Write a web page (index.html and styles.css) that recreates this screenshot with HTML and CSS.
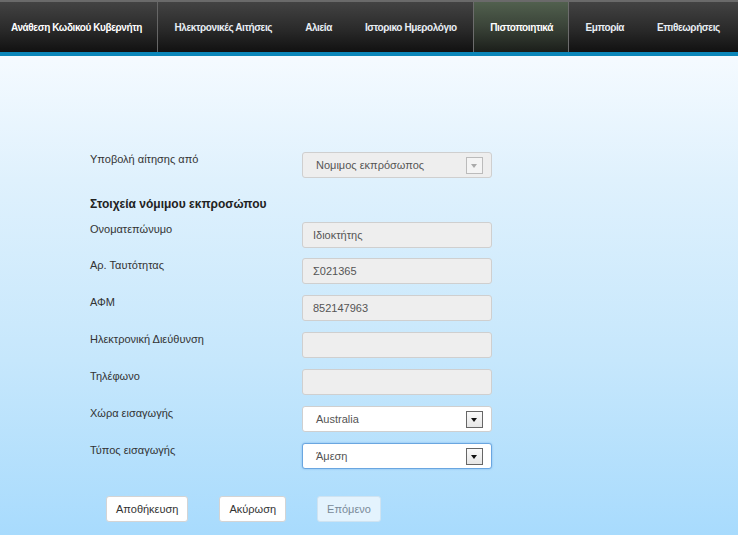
FILE: index.html
```html
<!DOCTYPE html>
<html lang="el">
<head>
<meta charset="utf-8">
<title>Πιστοποιητικά</title>
<link rel="stylesheet" href="styles.css">
</head>
<body>
<nav class="topnav">
  <a class="nav-item brand">Ανάθεση Κωδικού Κυβερνήτη</a>
  <a class="nav-item">Ηλεκτρονικές Αιτήσεις</a>
  <a class="nav-item">Αλιεία</a>
  <a class="nav-item">Ιστορικο Ημερολόγιο</a>
  <a class="nav-item active">Πιστοποιητικά</a>
  <a class="nav-item">Εμπορία</a>
  <a class="nav-item">Επιθεωρήσεις</a>
</nav>
<main class="page">
  <form class="form">
    <div class="row first">
      <label class="label">Υποβολή αίτησης από</label>
      <div class="control select disabled"><span>Νομιμος εκπρόσωπος</span><span class="arrow light"></span></div>
    </div>
    <h3 class="section">Στοιχεία νόμιμου εκπροσώπου</h3>
    <div class="row tight">
      <label class="label">Ονοματεπώνυμο</label>
      <div class="control input disabled">Ιδιοκτήτης</div>
    </div>
    <div class="row">
      <label class="label">Αρ. Ταυτότητας</label>
      <div class="control input disabled">Σ021365</div>
    </div>
    <div class="row">
      <label class="label">ΑΦΜ</label>
      <div class="control input disabled">852147963</div>
    </div>
    <div class="row">
      <label class="label">Ηλεκτρονική Διεύθυνση</label>
      <div class="control input disabled"></div>
    </div>
    <div class="row">
      <label class="label">Τηλέφωνο</label>
      <div class="control input disabled"></div>
    </div>
    <div class="row">
      <label class="label">Χώρα εισαγωγής</label>
      <div class="control select"><span>Australia</span><span class="arrow"></span></div>
    </div>
    <div class="row">
      <label class="label">Τύπος εισαγωγής</label>
      <div class="control select focus"><span>Άμεση</span><span class="arrow"></span></div>
    </div>
    <div class="actions">
      <button type="button" class="btn">Αποθήκευση</button>
      <button type="button" class="btn">Ακύρωση</button>
      <button type="button" class="btn off">Επόμενο</button>
    </div>
  </form>
</main>
</body>
</html>
```
FILE: styles.css
```css
html, body {
  margin: 0;
  padding: 0;
}
body {
  width: 738px;
  height: 535px;
  overflow: hidden;
  font-family: "Liberation Sans", Arial, sans-serif;
  background: linear-gradient(#f6fbff 0px, #f4faff 60px, #dff1fd 180px, #c6e7fc 360px, #a8dbfd 535px);
}
.topnav {
  display: flex;
  box-sizing: border-box;
  height: 56px;
  border-top: 2px solid #6a6a6a;
  border-bottom: 4px solid #0a86b9;
  background: linear-gradient(#434343, #2a2a2a 55%, #111);
}
.nav-item {
  display: flex;
  align-items: center;
  color: #e8eef4;
  font-size: 10px;
  letter-spacing: -0.4px;
  font-weight: bold;
  padding: 0 16.5px;
  white-space: nowrap;
  height: 50px;
}
.nav-item.brand {
  color: #fff;
  padding: 0 15px 0 11px;
  border-right: 1px solid #666;
}
.nav-item.active {
  background: linear-gradient(#51604e, #3a4338 50%, #1b1e1a);
  border-left: 1px solid #6c6c6c;
  border-right: 1px solid #6c6c6c;
  padding: 0 15px 0 16px;
  color: #fff;
}
.page {
  padding: 96px 0 0 90px;
}
.form {
  width: 402px;
}
.row {
  display: grid;
  grid-template-columns: 212px 190px;
  align-items: start;
  height: 37px;
}
.row.first { height: 44px; }
.row.tight { height: 36px; }
.label {
  font-size: 11px;
  color: #333;
  padding-top: 1px;
}
.section {
  margin: 0;
  font-size: 12px;
  font-weight: bold;
  color: #222;
  height: 26px;
  line-height: 16px;
}
.control {
  box-sizing: border-box;
  height: 26px;
  border: 1px solid #cfcfcf;
  border-radius: 3px;
  background: #fff;
  font-size: 11px;
  color: #555;
  display: flex;
  align-items: center;
  padding-left: 10px;
}
.control.disabled {
  background: #eeeeee;
}
.control.select {
  justify-content: space-between;
  padding-left: 13px;
  padding-right: 8px;
}
.control.focus {
  border-color: #6aa6e0;
  box-shadow: 0 0 2px rgba(82, 150, 220, 0.6);
}
.arrow {
  box-sizing: border-box;
  width: 17px;
  height: 17px;
  border: 1px solid #666;
  background: linear-gradient(#fafafa, #e6e6e6);
  position: relative;
}
.arrow::after {
  content: "";
  position: absolute;
  left: 4px;
  top: 6px;
  border-left: 3.5px solid transparent;
  border-right: 3.5px solid transparent;
  border-top: 4px solid #111;
}
.arrow.light {
  border-color: #bbb;
  background: #f4f4f4;
}
.arrow.light::after {
  border-top-color: #aaa;
}
.actions {
  display: flex;
  gap: 31px;
  padding: 16px 0 0 16px;
}
.btn {
  box-sizing: border-box;
  height: 26px;
  border: 1px solid #d4d4d4;
  border-radius: 3px;
  background: #fff;
  font-family: "Liberation Sans", Arial, sans-serif;
  font-size: 11px;
  color: #333;
  padding: 0 9px;
}
.btn.off {
  background: #e4f3fd;
  color: #7a8a98;
  border-color: #cfe3f1;
}
```
